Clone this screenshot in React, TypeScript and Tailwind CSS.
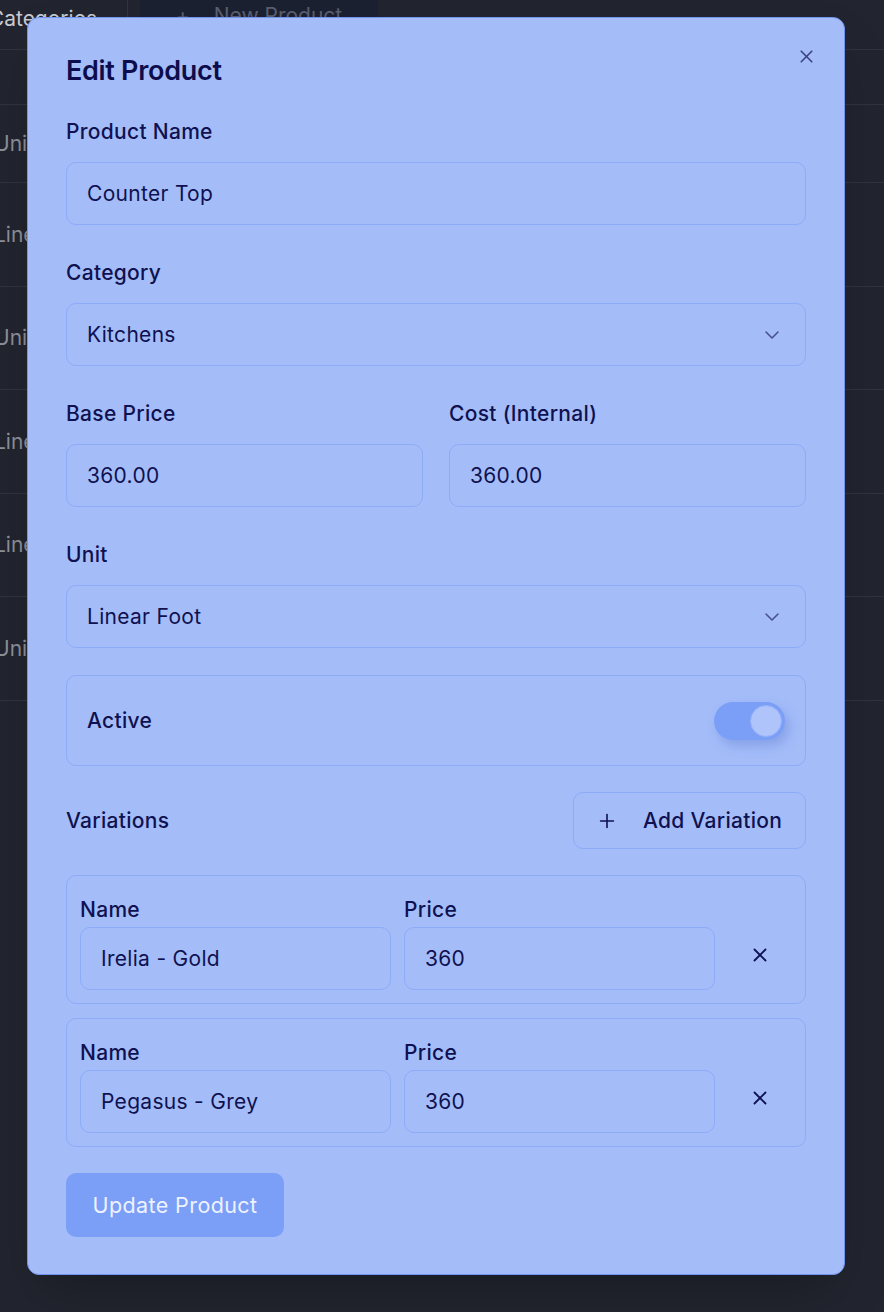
import React from "react";
import { X, ChevronDown, Plus } from "lucide-react";

const rows = ["Unit", "Linear Foot", "Unit", "Linear Foot", "Linear Foot", "Unit"];

function Field({ label, value, select = false }: { label: string; value: string; select?: boolean }) {
  return (
    <div className="flex flex-col">
      <label className="text-[21px] leading-7 font-medium tracking-[0.3px] text-[#0f1150] mb-4">{label}</label>
      <div className="h-[63px] rounded-[10px] border border-[#8dabf7] bg-[#a4bdf9] px-5 flex items-center justify-between">
        <span className="text-[21px] tracking-[0.3px] text-[#0f1150]">{value}</span>
        {select && <ChevronDown className="w-6 h-6 text-[#4a5090] mr-[1px]" strokeWidth={1.6} />}
      </div>
    </div>
  );
}

function Variation({ name, price }: { name: string; price: string }) {
  return (
    <div className="rounded-[10px] border border-[#8dabf7] px-[13px] pt-[22px] pb-[13px] grid grid-cols-[1fr_1fr_64px] gap-x-[13px]">
      <div className="flex flex-col">
        <span className="text-[21px] leading-6 font-medium tracking-[0.3px] text-[#0f1150] mb-[5px]">Name</span>
        <div className="h-[63px] rounded-[10px] border border-[#8dabf7] px-5 flex items-center text-[21px] tracking-[0.3px] text-[#0f1150]">{name}</div>
      </div>
      <div className="flex flex-col">
        <span className="text-[21px] leading-6 font-medium tracking-[0.3px] text-[#0f1150] mb-[5px]">Price</span>
        <div className="h-[63px] rounded-[10px] border border-[#8dabf7] px-5 flex items-center text-[21px] tracking-[0.3px] text-[#0f1150]">{price}</div>
      </div>
      <div className="flex items-center justify-center pt-[22px]">
        <X className="w-[22px] h-[22px] text-[#0f1150]" strokeWidth={2} />
      </div>
    </div>
  );
}

export default function App() {
  return (
    <div className="relative w-[884px] h-[1312px] overflow-hidden bg-[#22252f] font-['Inter',sans-serif]">
      {/* page behind the dialog */}
      <div className="flex items-start h-[50px] border-b border-[#31343f]">
        <div className="w-[128px] h-[50px] border-r border-[#31343f] flex items-start pt-[3px] justify-end pr-[30px] text-[21px] text-[#c9cad0]">
          Categories
        </div>
        <div className="ml-3 w-[238px] h-[32px] bg-[#1c2132] flex items-center justify-center gap-6 text-[21px] text-[#5a5f6e]">
          <span>+</span>
          <span>New Product</span>
        </div>
      </div>
      <div className="h-[55px] border-b border-[#31343f]" />
      <div className="-ml-[6px]">
        {rows.map((r, i) => (
          <div
            key={i}
            className={`${i === 0 ? "h-[78px]" : "h-[103.5px]"} border-b border-[#31343f] flex items-center text-[21px] text-[#8e909a]`}
          >
            {r}
          </div>
        ))}
      </div>

      {/* dialog */}
      <div className="absolute left-[27px] top-[17px] w-[818px] h-[1258px] rounded-[12px] border border-[#7393f1] bg-[#a4bdf9] px-[38px] pt-[37px] shadow-2xl">
        <button className="absolute right-[27px] top-[28px] text-[#3a4080]">
          <X className="w-[21px] h-[21px]" strokeWidth={1.9} />
        </button>
        <h2 className="text-[27px] leading-8 font-semibold text-[#0d0d4d] tracking-[-0.3px]">Edit Product</h2>

        <div className="mt-[31px] flex flex-col gap-[34px]">
          <Field label="Product Name" value="Counter Top" />
          <Field label="Category" value="Kitchens" select />
          <div className="grid grid-cols-2 gap-[26px]">
            <Field label="Base Price" value="360.00" />
            <Field label="Cost (Internal)" value="360.00" />
          </div>
        </div>
        <div className="mt-[34px]">
          <Field label="Unit" value="Linear Foot" select />
        </div>

        <div className="mt-[27px] h-[91px] rounded-[10px] border border-[#8dabf7] px-5 flex items-center justify-between">
          <span className="text-[21px] font-medium tracking-[0.3px] text-[#0f1150]">Active</span>
          <div className="w-[71px] h-[38px] rounded-full bg-[#7b9ef7] flex items-center justify-end pr-[3px] shadow-[4px_6px_12px_rgba(80,110,200,0.35)]">
            <div className="w-[32px] h-[32px] rounded-full bg-[#aec4fb] border border-[#95b0f8]" />
          </div>
        </div>

        <div className="mt-[26px] flex items-center justify-between">
          <span className="text-[21px] font-medium tracking-[0.3px] text-[#0f1150]">Variations</span>
          <button className="h-[57px] w-[233px] rounded-[10px] border border-[#8dabf7] flex items-center pl-[22px] gap-[25px] text-[21px] font-medium tracking-[0.3px] text-[#0f1150]">
            <Plus className="w-[22px] h-[22px]" strokeWidth={1.75} />
            Add Variation
          </button>
        </div>

        <div className="mt-[26px] flex flex-col gap-[14px]">
          <Variation name="Irelia - Gold" price="360" />
          <Variation name="Pegasus - Grey" price="360" />
        </div>

        <button className="mt-[26px] h-[64px] w-[218px] rounded-[10px] bg-[#7b9ef7] text-[21.5px] tracking-[0.4px] text-[#eef2ff]">
          Update Product
        </button>
      </div>
    </div>
  );
}
